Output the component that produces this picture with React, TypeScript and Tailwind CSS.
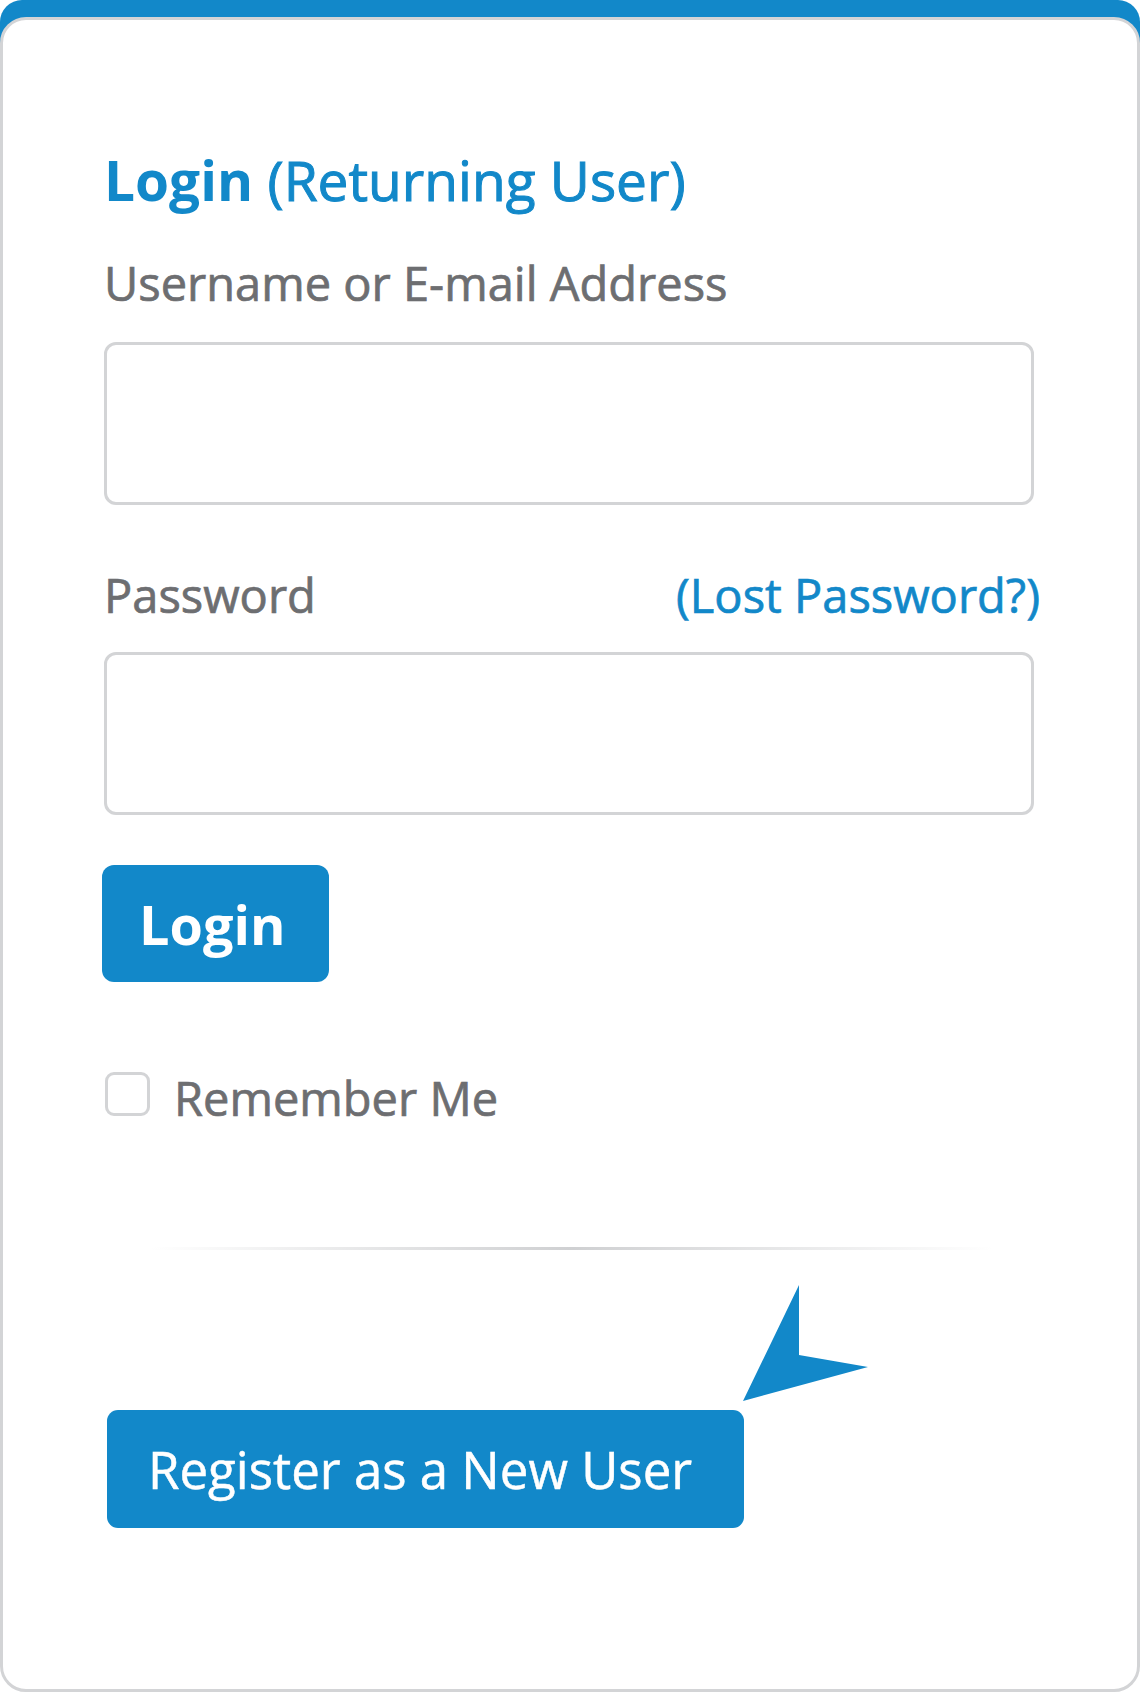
import React from "react";

export default function App() {
  return (
    <div className="w-[1140px] h-[1692px] bg-white" style={{ fontFamily: '"Open Sans", "Liberation Sans", sans-serif' }}>
      <div className="h-full rounded-t-[22px] pt-[17px] bg-[linear-gradient(to_bottom,#1288c9_0px,#1288c9_70px,#ffffff_70px)]">
        <div className="h-[1675px] bg-white border-[3px] border-[#d3d4d6] rounded-[26px] pl-[101px] pr-[103px] flex flex-col">
          <h1 className="mt-[132px] text-[55px] leading-none text-[#1288c9] whitespace-nowrap">
            <span className="font-bold">Login</span>{" "}
            <span className="font-normal [-webkit-text-stroke:1px_#1288c9]">(Returning User)</span>
          </h1>
          <label className="mt-[53px] text-[47px] leading-none font-normal text-[#6d6e71] [-webkit-text-stroke:0.7px_#6d6e71] whitespace-nowrap">
            Username or E-mail Address
          </label>
          <div className="mt-[35px] h-[163px] border-[3px] border-[#d3d4d6] rounded-[12px] bg-white" />
          <div className="mt-[67px] flex justify-between items-baseline text-[47px] leading-none font-normal whitespace-nowrap">
            <span className="text-[#6d6e71] [-webkit-text-stroke:0.7px_#6d6e71]">Password</span>
            <span className="text-[#1288c9] [-webkit-text-stroke:0.7px_#1288c9] mr-[-6px]">(Lost Password?)</span>
          </div>
          <div className="mt-[33px] h-[163px] border-[3px] border-[#d3d4d6] rounded-[12px] bg-white" />
          <div className="mt-[50px] flex">
            <button className="ml-[-2px] w-[227px] h-[117px] rounded-[12px] bg-[#1288c9] text-white text-[54px] leading-none font-bold flex items-center pl-[37px]">
              Login
            </button>
          </div>
          <div className="mt-[90px] flex items-start">
            <div className="ml-[1px] w-[45px] h-[44px] border-[3px] border-[#d3d4d6] rounded-[9px] bg-white" />
            <span className="ml-[24px] mt-[3px] text-[47px] leading-none font-normal text-[#6d6e71] [-webkit-text-stroke:0.7px_#6d6e71] whitespace-nowrap">
              Remember Me
            </span>
          </div>
          <div className="mt-[125px] ml-[47px] w-[842px] h-[3px] bg-[linear-gradient(to_right,rgba(209,211,212,0),#cfd0d2_50%,rgba(209,211,212,0))]" />
          <div className="mt-[160px] ml-[3px] flex">
            <div className="relative">
              <button className="w-[637px] h-[118px] rounded-[11px] bg-[#1288c9] text-white text-[51px] leading-none font-normal [-webkit-text-stroke:0.5px_#ffffff] flex items-center pl-[41px] whitespace-nowrap">
                Register as a New User
              </button>
              <svg
                className="absolute left-[634px] top-[-126px]"
                width="130"
                height="120"
                viewBox="0 0 130 120"
              >
                <polygon points="58,1 58,71 127,83 2,117" fill="#1288c9" />
              </svg>
            </div>
          </div>
        </div>
      </div>
    </div>
  );
}
